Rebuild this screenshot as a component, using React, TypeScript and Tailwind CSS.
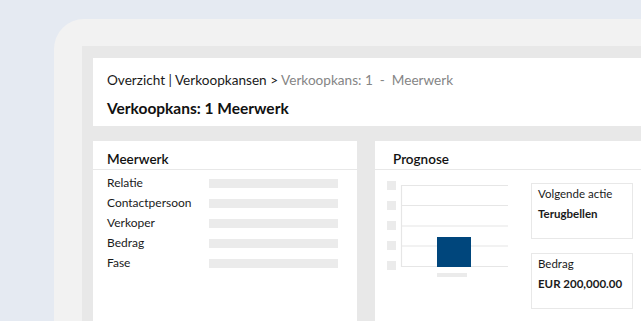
import React from 'react';

const rows = ['Relatie', 'Contactpersoon', 'Verkoper', 'Bedrag', 'Fase'];

const PrognoseChart: React.FC = () => (
  <svg width="121" height="102" viewBox="0 0 121 102" className="shrink-0">
    {[3, 23, 43, 63, 83].map((y) => (
      <rect key={y} x="0" y={y} width="9" height="9" fill="#ebebeb" />
    ))}
    {[7.5, 27.5, 48, 68].map((y) => (
      <line key={y} x1="14" x2="121" y1={y} y2={y} stroke="#e6e6e6" strokeWidth="1.2" />
    ))}
    <line x1="14.5" x2="14.5" y1="7" y2="89" stroke="#e6e6e6" strokeWidth="1.2" />
    <line x1="14" x2="121" y1="88.5" y2="88.5" stroke="#e6e6e6" strokeWidth="1.2" />
    <rect x="50" y="59" width="34" height="30" fill="#00467c" />
    <rect x="50" y="95" width="30" height="4" fill="#ebebeb" />
  </svg>
);

const InfoBox: React.FC<{ label: string; value: string }> = ({ label, value }) => (
  <div className="h-[56px] w-[102px] border border-[#e8e8e8] pl-[6px]">
    <div className="pt-[1px] text-[11.5px] leading-[18px] text-[#1a1a1a]">{label}</div>
    <div className="mt-[2px] text-[11.5px] font-bold leading-[18px] text-[#1a1a1a]">{value}</div>
  </div>
);

export default function App() {
  return (
    <div
      className="h-[321px] w-[641px] overflow-hidden bg-[#e5eaf2]"
      style={{ fontFamily: 'Lato, "Noto Sans", sans-serif' }}
    >
      <div className="ml-[54px] mt-[19px] h-[302px] rounded-tl-[30px] bg-[#f2f2f2] pl-[28px] pt-[27px]">
        <div className="flex h-full flex-col bg-[#e8e8e8] pl-[11px] pt-[12px]">
          {/* Header */}
          <div className="h-[68px] bg-white pl-[14px] pt-[12px]">
            <div className="text-[13.6px] leading-[20px] text-[#1a1a1a]">
              Overzicht | Verkoopkansen &gt;{' '}
              <span className="text-[#858585]">Verkoopkans: 1&nbsp; - &nbsp;Meerwerk</span>
            </div>
            <div className="mt-[8px] text-[15.5px] font-bold leading-[20px] text-[#111]">
              Verkoopkans: 1 Meerwerk
            </div>
          </div>

          <div className="mt-[15px] flex flex-1 gap-[18px]">
            {/* Meerwerk */}
            <div className="w-[264px] bg-white">
              <div className="h-[29px] border-b border-[#e8e8e8] pl-[14px] pt-[9px] text-[13.5px] font-semibold leading-[18px] text-[#111]">
                Meerwerk
              </div>
              <div className="pl-[14px] pt-[3px]">
                {rows.map((r) => (
                  <div key={r} className="flex h-[20px] items-center">
                    <span className="w-[102px] text-[12px] text-[#1a1a1a]">{r}</span>
                    <span className="h-[9px] w-[129px] bg-[#ebebeb]" />
                  </div>
                ))}
              </div>
            </div>

            {/* Prognose */}
            <div className="flex-1 bg-white">
              <div className="h-[29px] border-b border-[#e8e8e8] pl-[18px] pt-[9px] text-[13.5px] font-semibold leading-[18px] text-[#111]">
                Prognose
              </div>
              <div className="flex pl-[12px] pt-[8px]">
                <PrognoseChart />
                <div className="ml-[23px] mt-[5px] flex flex-col gap-[14px]">
                  <InfoBox label="Volgende actie" value="Terugbellen" />
                  <InfoBox label="Bedrag" value="EUR 200,000.00" />
                </div>
              </div>
            </div>
          </div>
        </div>
      </div>
    </div>
  );
}
